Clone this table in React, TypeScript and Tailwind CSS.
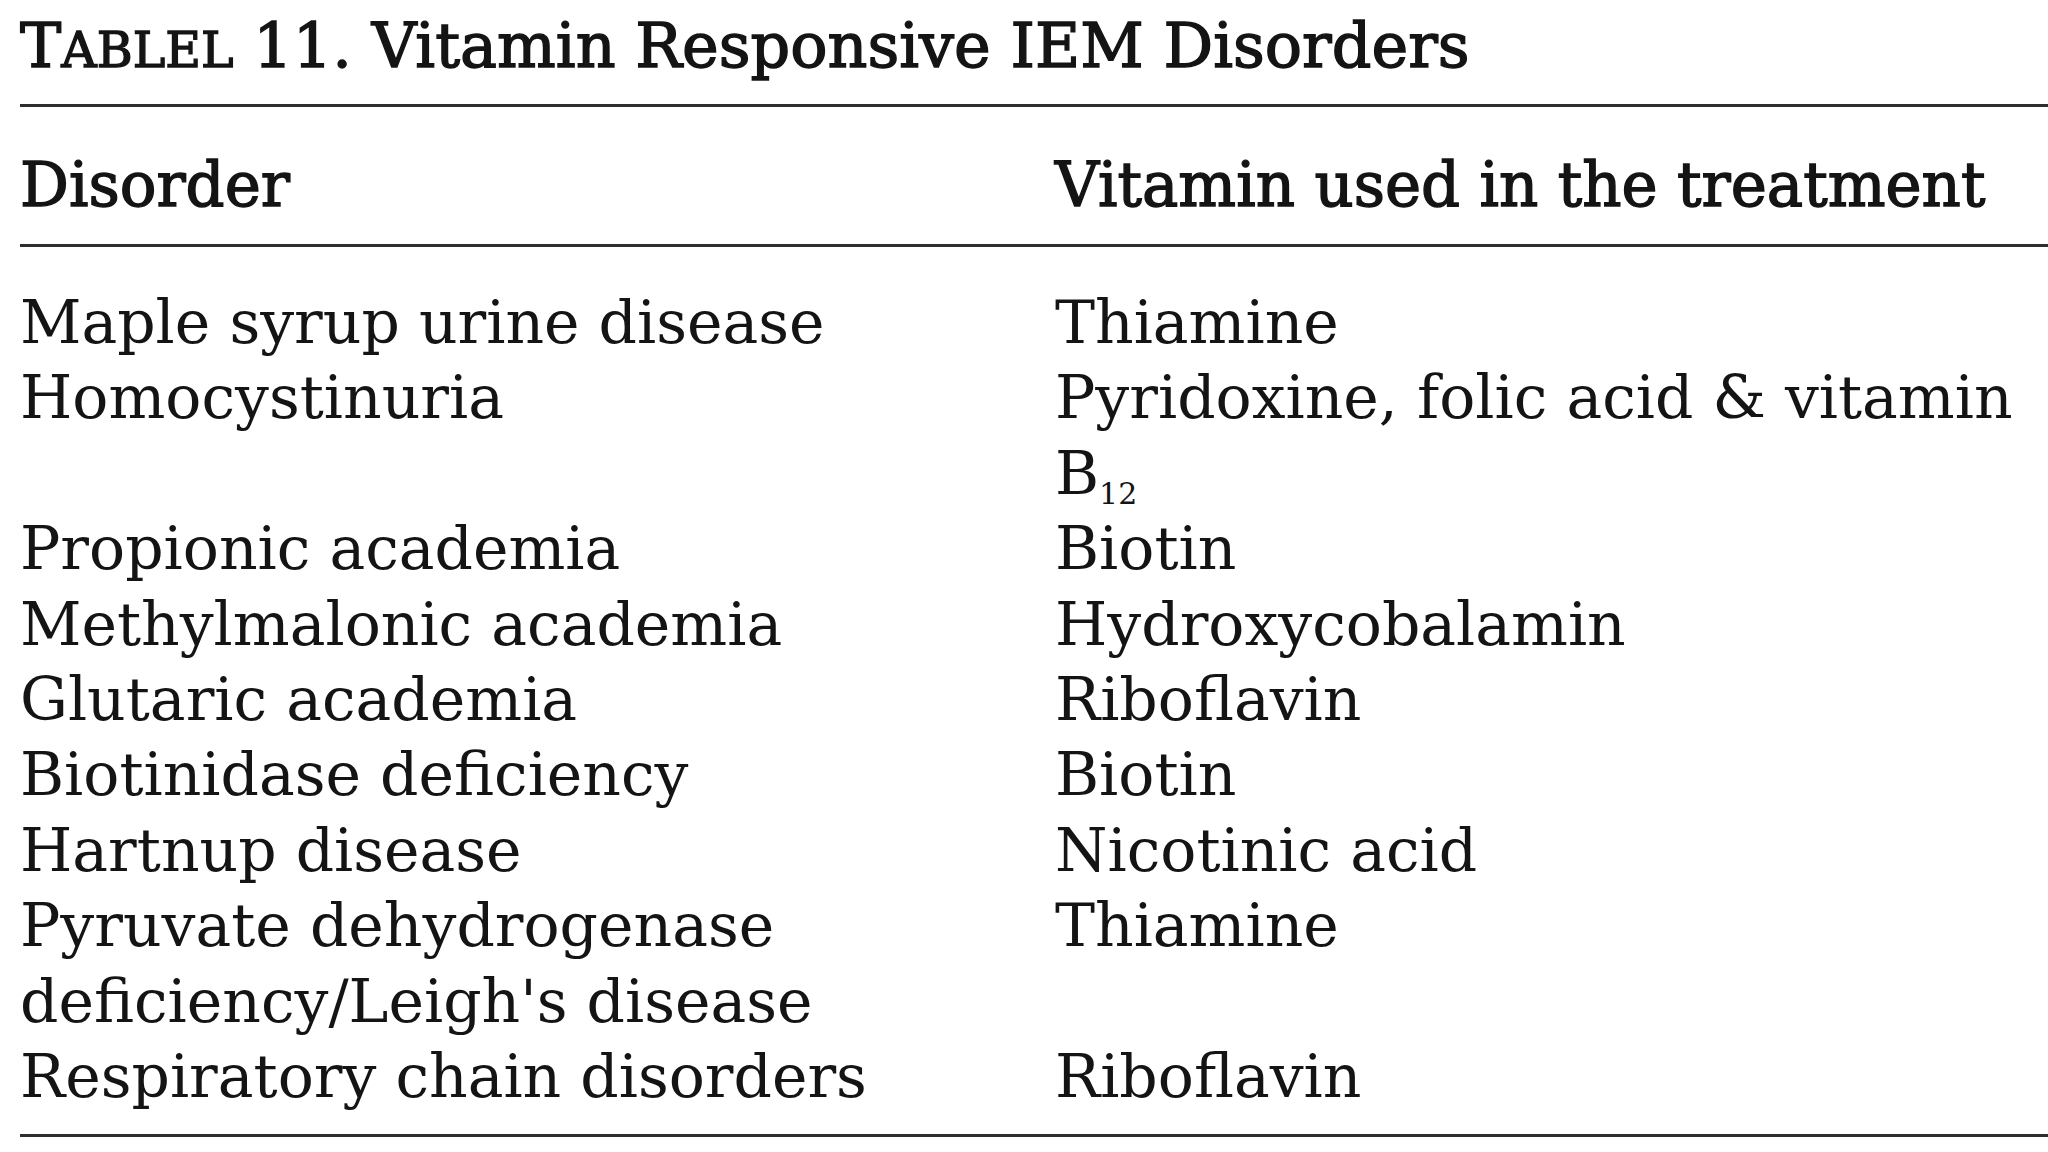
import { FC, ReactNode } from "react";

type Row = {
  disorder: ReactNode;
  vitamin: ReactNode;
};

// 表の行データ
const rows: Row[] = [
  { disorder: "Maple syrup urine disease", vitamin: "Thiamine" },
  {
    disorder: "Homocystinuria",
    vitamin: (
      <>
        Pyridoxine, folic acid &amp; vitamin
        <br />B
        <span className="text-[30px] leading-none align-[-10px]">12</span>
      </>
    ),
  },
  { disorder: "Propionic academia", vitamin: "Biotin" },
  { disorder: "Methylmalonic academia", vitamin: "Hydroxycobalamin" },
  { disorder: "Glutaric academia", vitamin: "Riboflavin" },
  { disorder: "Biotinidase deficiency", vitamin: "Biotin" },
  { disorder: "Hartnup disease", vitamin: "Nicotinic acid" },
  {
    disorder: (
      <>
        Pyruvate dehydrogenase
        <br />
        deficiency/Leigh's disease
      </>
    ),
    vitamin: "Thiamine",
  },
  { disorder: "Respiratory chain disorders", vitamin: "Riboflavin" },
];

const Rule: FC = () => <div className="h-[3px] bg-[#2e2e2e]" />;

export default function App() {
  return (
    <div className="min-h-screen bg-white pl-[20px] font-['DejaVu_Serif',serif] text-[#141414]">
      {/* タイトル */}
      <h1 className="pt-[15px] pb-[27px] text-[62px] leading-none font-normal whitespace-nowrap [-webkit-text-stroke:1.4px_#141414]">
        T<span className="text-[49px]">ABLEL</span> 11. Vitamin Responsive IEM
        Disorders
      </h1>
      <Rule />

      {/* 見出し */}
      <div className="grid grid-cols-[1035px_1fr] pt-[47px] pb-[29px] text-[61px] leading-none whitespace-nowrap [-webkit-text-stroke:1.4px_#141414]">
        <div>Disorder</div>
        <div>Vitamin used in the treatment</div>
      </div>
      <Rule />

      {/* 本文 */}
      <div className="grid grid-cols-[1035px_1fr] pt-[38px] pb-[20px] text-[60px] leading-[75.4px] whitespace-nowrap">
        {rows.map((row, i) => (
          <div key={i} className="contents">
            <div>{row.disorder}</div>
            <div>{row.vitamin}</div>
          </div>
        ))}
      </div>
      <Rule />
    </div>
  );
}
